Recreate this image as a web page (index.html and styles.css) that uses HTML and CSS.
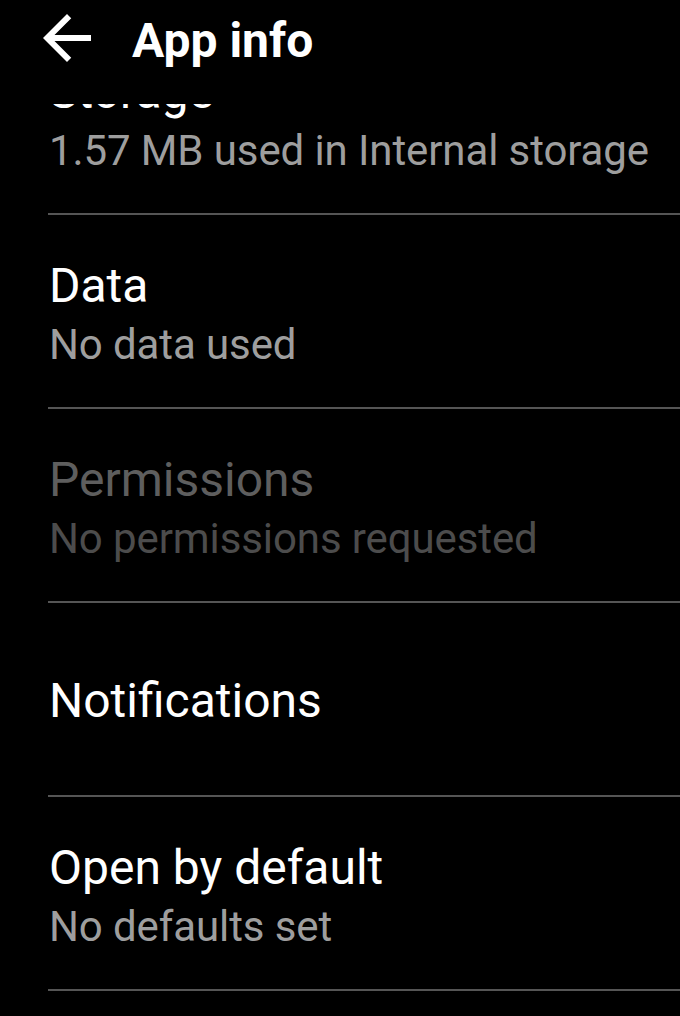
FILE: index.html
```html
<!DOCTYPE html>
<html lang="en">
<head>
<meta charset="utf-8">
<title>App info</title>
<link rel="stylesheet" href="styles.css">
</head>
<body>
<div class="screen">
  <header class="appbar">
    <svg class="back" viewBox="0 0 24 24" width="72" height="72" aria-hidden="true">
      <path d="M20 11H7.83l5.59-5.59L12 4l-8 8 8 8 1.41-1.41L7.83 13H20v-2z" fill="#fff"/>
    </svg>
    <h1 class="appbar-title">App info</h1>
  </header>
  <div class="viewport">
    <ul class="list">
      <li class="row">
        <div class="row-title">Storage</div>
        <div class="row-sub">1.57 MB used in Internal storage</div>
      </li>
      <li class="row">
        <div class="row-title">Data</div>
        <div class="row-sub">No data used</div>
      </li>
      <li class="row disabled">
        <div class="row-title">Permissions</div>
        <div class="row-sub">No permissions requested</div>
      </li>
      <li class="row single">
        <div class="row-title">Notifications</div>
      </li>
      <li class="row">
        <div class="row-title">Open by default</div>
        <div class="row-sub">No defaults set</div>
      </li>
    </ul>
  </div>
</div>
</body>
</html>
```

FILE: styles.css
```css
* { box-sizing: border-box; }

html, body {
  margin: 0;
  padding: 0;
  background: #000;
}

body {
  font-family: Roboto, "Noto Sans", "Liberation Sans", sans-serif;
  color: #fff;
}

.screen {
  width: 680px;
  height: 1016px;
  display: flex;
  flex-direction: column;
  overflow: hidden;
  background: #000;
}

.appbar {
  flex: 0 0 104px;
  display: flex;
  align-items: flex-start;
  padding-top: 2px;
  padding-left: 31px;
  background: #000;
}

.back {
  display: block;
  flex: 0 0 72px;
}

.appbar-title {
  margin: 3px 0 0 29px;
  font-size: 48px;
  line-height: 72px;
  font-weight: 700;
  color: #fff;
}

.viewport {
  flex: 1 1 auto;
  overflow: hidden;
}

.list {
  list-style: none;
  margin: -83px 0 0 48px;
  padding: 0;
}

.row {
  height: 194px;
  padding-top: 41px;
  padding-left: 1px;
  border-bottom: 2px solid #555;
}

.row.single {
  padding-top: 68px;
}

.row-title {
  font-size: 48px;
  line-height: 59px;
  color: #fff;
  white-space: nowrap;
}

.row-sub {
  font-size: 42px;
  line-height: 59px;
  color: #9e9e9e;
  white-space: nowrap;
  letter-spacing: -0.1px;
}

.row.disabled .row-title {
  color: #5e5e5e;
}

.row.disabled .row-sub {
  color: #4c4c4c;
}
```
